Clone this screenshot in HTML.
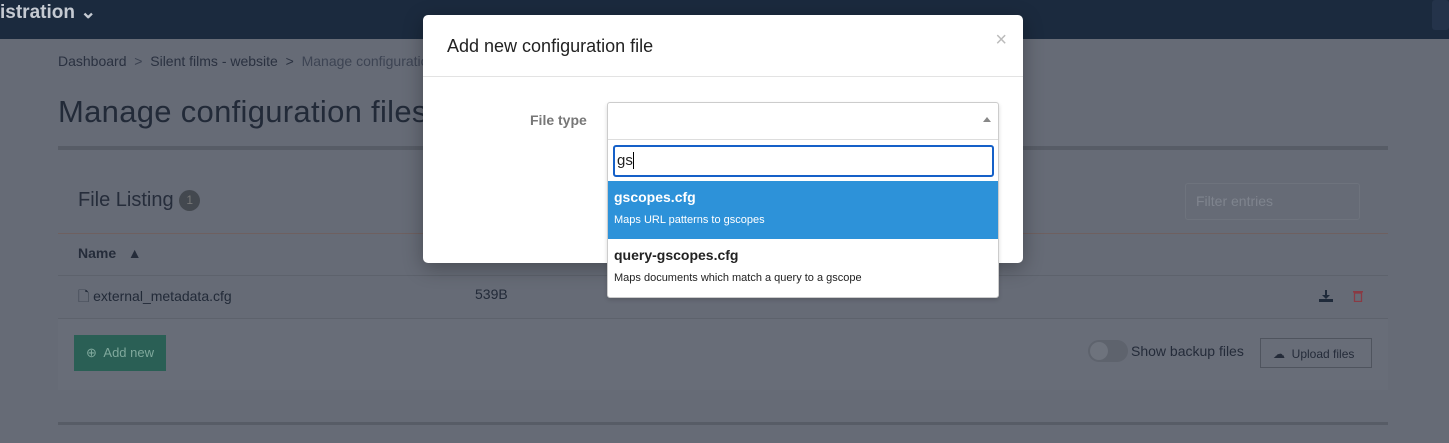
<!DOCTYPE html>
<html><head><style>
*{box-sizing:border-box;margin:0;padding:0}
body{width:1449px;height:443px;overflow:hidden;background:#666b76;font-family:"Liberation Sans",sans-serif;position:relative;color:#2a3140}
.abs{position:absolute}
</style></head><body>
<div class="abs" style="left:0;top:0;width:1449px;height:39px;background:#1b2a3e"></div>
<div class="abs" style="left:0;top:1px;color:#c5cad2;font-size:19px;font-weight:bold">istration &#8964;</div>
<div class="abs" style="left:1432px;top:0;width:17px;height:30px;background:#24334a;border-radius:3px"></div>
<div class="abs" style="left:58px;top:53px;font-size:14px;color:#2a3140">Dashboard &nbsp;<span style="color:#3a4150">&gt;</span>&nbsp; Silent films - website &nbsp;<span>&gt;</span>&nbsp; <span style="color:#3d4453">Manage configuration files</span></div>
<div class="abs" style="left:58px;top:94px;font-size:31px;letter-spacing:0.3px;color:#222a38">Manage configuration files</div>
<div class="abs" style="left:58px;top:146px;width:1330px;height:4px;background:#575c66"></div>
<div class="abs" style="left:78px;top:189px;font-size:20px;color:#262d3b">File Listing <span style="display:inline-block;width:21px;height:21px;border-radius:50%;background:#43484f;color:#777;font-size:12px;text-align:center;line-height:21px;vertical-align:2px">1</span></div>
<div class="abs" style="left:1185px;top:183px;width:175px;height:37px;border:1px solid #6e737d;border-radius:3px;font-size:14px;color:#7f848e;padding:9px 10px">Filter entries</div>
<div class="abs" style="left:58px;top:233px;width:1330px;height:1px;background:#6e6060"></div>
<div class="abs" style="left:78px;top:245px;font-size:14px;font-weight:bold;color:#252c3a">Name &nbsp; ▲</div>
<div class="abs" style="left:58px;top:275px;width:1330px;height:1px;background:#5d626c"></div>
<div class="abs" style="left:78px;top:286px;font-size:14px;color:#222a38">🗋 external_metadata.cfg</div>
<div class="abs" style="left:475px;top:286px;font-size:14px;color:#222a38">539B</div>
<svg class="abs" style="left:1319px;top:290px" width="14" height="12" viewBox="0 0 14 12"><path d="M6 0h2v5h3l-4 4-4-4h3z" fill="#1f2a3a"/><rect x="0" y="9" width="14" height="3" fill="#1f2a3a"/></svg>
<svg class="abs" style="left:1353px;top:290px" width="10" height="12" viewBox="0 0 10 12"><rect x="0" y="1" width="10" height="1.5" fill="#8a3a44"/><rect x="1.5" y="3" width="7" height="8.5" fill="none" stroke="#8a3a44" stroke-width="1.3"/></svg>
<div class="abs" style="left:58px;top:318px;width:1330px;height:72px;background:#686d78;border-top:1px solid #5d626c"></div>
<div class="abs" style="left:74px;top:335px;width:92px;height:36px;background:#2a5f55;color:#7fa89c;font-size:13px;padding:10px 0 0 12px">⊕&nbsp; Add new</div>
<div class="abs" style="left:1088px;top:340px;width:40px;height:22px;border-radius:11px;background:#5e636d"><div style="width:18px;height:18px;border-radius:50%;background:#6e737d;margin:2px"></div></div>
<div class="abs" style="left:1131px;top:343px;font-size:14px;color:#242b39">Show backup files</div>
<div class="abs" style="left:1260px;top:338px;width:112px;height:30px;border:1px solid #4f545e;font-size:12px;color:#242b39;padding:8px 0 0 12px">☁&nbsp; Upload files</div>
<div class="abs" style="left:58px;top:422px;width:1330px;height:3px;background:#575c66"></div>

<div class="abs" style="left:423px;top:15px;width:600px;height:248px;background:#fff;border-radius:5px;box-shadow:0 5px 20px rgba(0,0,0,.3)">
 <div style="position:absolute;left:24px;top:21px;font-size:18px;color:#222">Add new configuration file</div>
 <div style="position:absolute;right:16px;top:14px;font-size:20px;color:#bbb">×</div>
 <div style="position:absolute;left:0;top:61px;width:600px;height:1px;background:#e3e3e3"></div>
 <div style="position:absolute;left:107px;top:97px;font-size:14px;font-weight:bold;color:#777">File type</div>
</div>
<div class="abs" style="left:607px;top:102px;width:392px;height:196px;background:#fff;border:1px solid #ccc;border-radius:3px;box-shadow:0 2px 4px rgba(0,0,0,.15)">
 <div style="position:absolute;right:7px;top:14px;width:0;height:0;border-left:4px solid transparent;border-right:4px solid transparent;border-bottom:5px solid #888"></div>
 <div style="position:absolute;left:0;top:36px;width:390px;height:1px;background:#ddd"></div>
 <div style="position:absolute;left:5px;top:42px;width:381px;height:32px;border:2px solid #1560c8;border-radius:3px;font-size:15px;padding:5px 2px;color:#222">gs<span style="border-left:1px solid #000;"></span></div>
 <div style="position:absolute;left:0;top:78px;width:390px;height:58px;background:#2d92d9;color:#fff;padding:8px 6px">
  <div style="font-size:14px;font-weight:bold">gscopes.cfg</div>
  <div style="font-size:11px;margin-top:9px">Maps URL patterns to gscopes</div>
 </div>
 <div style="position:absolute;left:0;top:136px;width:390px;height:58px;color:#222;padding:8px 6px">
  <div style="font-size:14px;font-weight:bold">query-gscopes.cfg</div>
  <div style="font-size:11px;margin-top:9px">Maps documents which match a query to a gscope</div>
 </div>
</div>
</body></html>
